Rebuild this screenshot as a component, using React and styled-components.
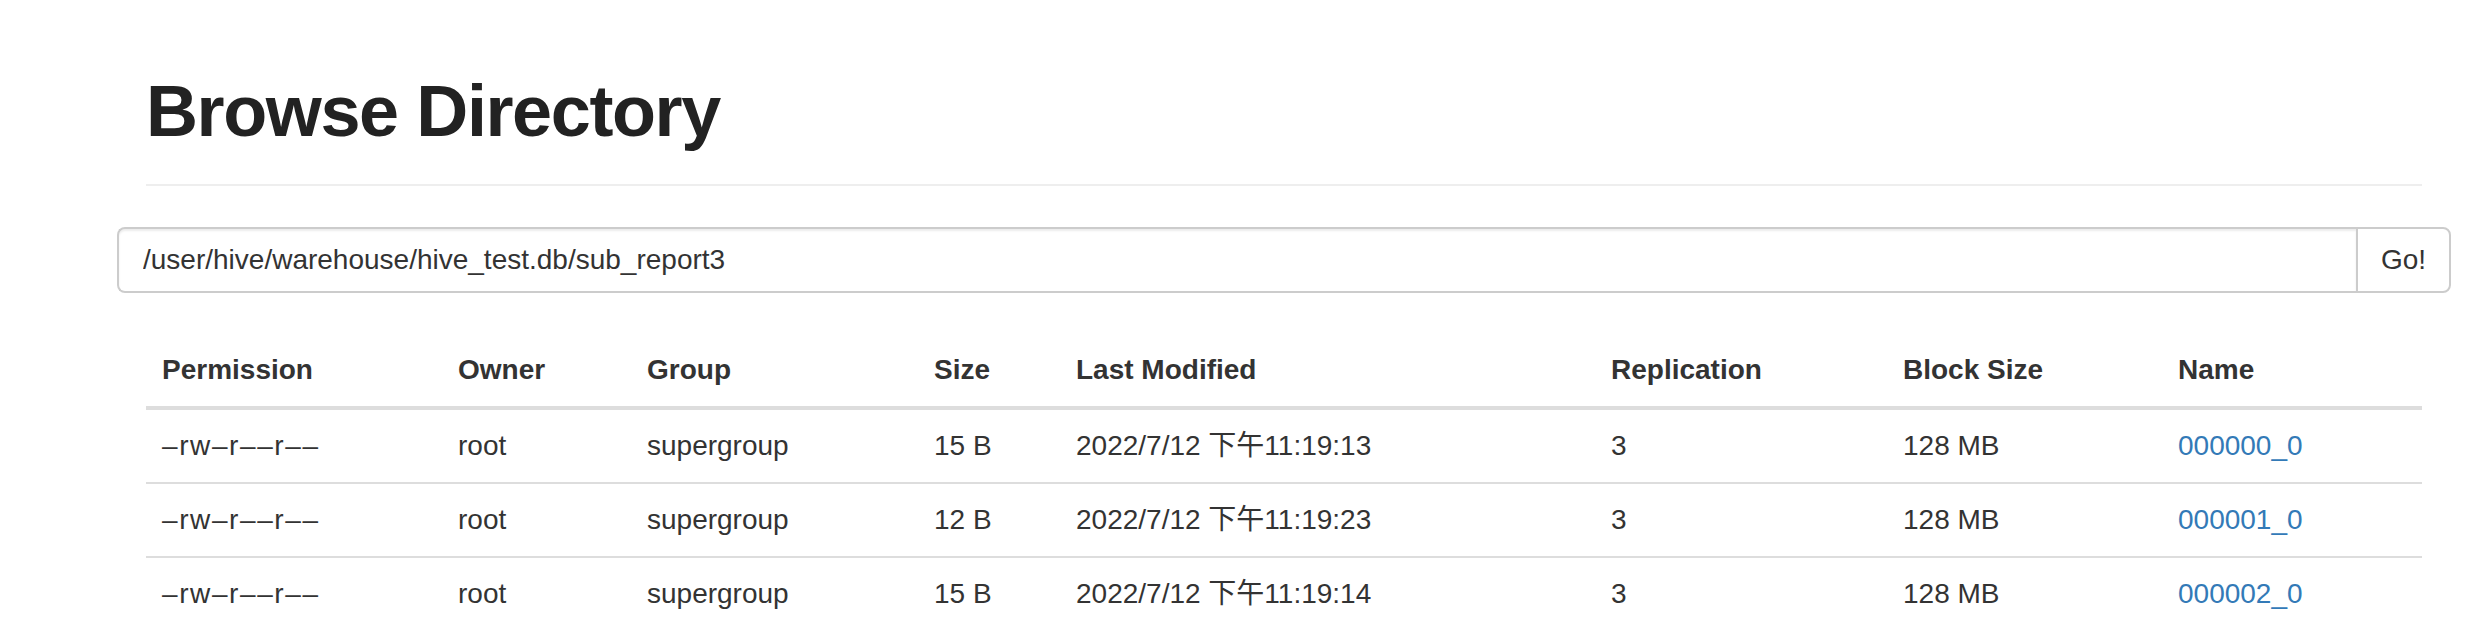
import styled, { createGlobalStyle } from "styled-components";

const GlobalStyle = createGlobalStyle`
  html, body {
    margin: 0;
    padding: 0;
    background: #fff;
  }
  body {
    font-family: "Liberation Sans", "Noto Sans CJK SC", sans-serif;
    font-size: 28px;
    color: #333;
  }
`;

const Page = styled.div`
  padding: 72px 48px 0 146px;
  width: 2276px;
`;

const PageHeader = styled.div`
  border-bottom: 2px solid #eee;
  padding-bottom: 33px;
`;

const Title = styled.h1`
  margin: 0;
  font-size: 72px;
  line-height: 79px;
  font-weight: 700;
  color: #222;
  letter-spacing: -1.4px;
`;

const SearchRow = styled.form`
  display: flex;
  margin: 41px 0 0 -29px;
  width: 2334px;
  height: 66px;
`;

const PathInput = styled.input`
  flex: 1;
  box-sizing: border-box;
  height: 66px;
  padding: 0 24px;
  border: 2px solid #ccc;
  border-right: none;
  border-radius: 8px 0 0 8px;
  font-family: inherit;
  font-size: 28px;
  color: #333;
  box-shadow: inset 0 2px 2px rgba(0, 0, 0, 0.075);
  outline: none;
`;

const GoButton = styled.button`
  box-sizing: border-box;
  width: 95px;
  height: 66px;
  border: 2px solid #ccc;
  border-radius: 0 8px 8px 0;
  background: #fff;
  font-family: inherit;
  font-size: 28px;
  color: #333;
  padding: 0;
`;

const Table = styled.table`
  margin-top: 41px;
  width: 2276px;
  border-collapse: collapse;
  border-spacing: 0;
  table-layout: fixed;
`;

const Th = styled.th`
  text-align: left;
  font-weight: 700;
  padding: 16px;
  line-height: 40px;
  border-bottom: 4px solid #ddd;
  vertical-align: bottom;
`;

const Td = styled.td`
  padding: 16px;
  line-height: 40px;
  border-top: 2px solid #ddd;
  white-space: nowrap;
  letter-spacing: ${(p) => (p.$spaced ? "1.6px" : "normal")};
`;

const FileLink = styled.a`
  color: #337ab7;
  text-decoration: none;
`;

const columns = [
  { label: "Permission", width: 296 },
  { label: "Owner", width: 189 },
  { label: "Group", width: 287 },
  { label: "Size", width: 142 },
  { label: "Last Modified", width: 535 },
  { label: "Replication", width: 292 },
  { label: "Block Size", width: 275 },
  { label: "Name", width: 260 },
];

const files = [
  { size: "15 B", modified: "2022/7/12 下午11:19:13", name: "000000_0" },
  { size: "12 B", modified: "2022/7/12 下午11:19:23", name: "000001_0" },
  { size: "15 B", modified: "2022/7/12 下午11:19:14", name: "000002_0" },
];

export default function App() {
  return (
    <>
      <GlobalStyle />
      <Page>
        <PageHeader>
          <Title>Browse Directory</Title>
        </PageHeader>
        <SearchRow onSubmit={(e) => e.preventDefault()}>
          <PathInput defaultValue="/user/hive/warehouse/hive_test.db/sub_report3" />
          <GoButton type="submit">Go!</GoButton>
        </SearchRow>
        <Table>
          <colgroup>
            {columns.map((c) => (
              <col key={c.label} style={{ width: c.width }} />
            ))}
          </colgroup>
          <thead>
            <tr>
              {columns.map((c) => (
                <Th key={c.label}>{c.label}</Th>
              ))}
            </tr>
          </thead>
          <tbody>
            {files.map((f) => (
              <tr key={f.name}>
                <Td $spaced>–rw–r––r––</Td>
                <Td>root</Td>
                <Td>supergroup</Td>
                <Td>{f.size}</Td>
                <Td>{f.modified}</Td>
                <Td>3</Td>
                <Td>128 MB</Td>
                <Td>
                  <FileLink href="#">{f.name}</FileLink>
                </Td>
              </tr>
            ))}
          </tbody>
        </Table>
      </Page>
    </>
  );
}
